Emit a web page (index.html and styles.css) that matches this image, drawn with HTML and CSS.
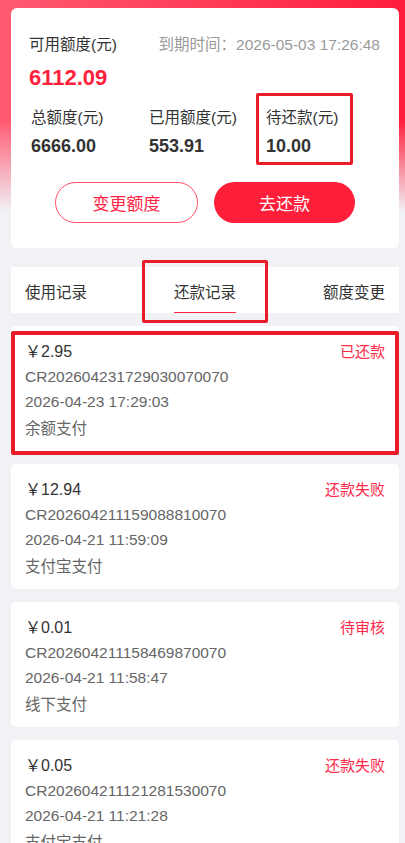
FILE: index.html
```html
<!DOCTYPE html>
<html lang="zh-CN">
<head>
<meta charset="utf-8">
<title>还款记录</title>
<link rel="stylesheet" href="styles.css">
</head>
<body>
<div class="page">
  <section class="summary">
    <div class="top-row">
      <span class="label">可用额度(元)</span>
      <span class="expire">到期时间：2026-05-03 17:26:48</span>
    </div>
    <div class="available">6112.09</div>
    <div class="stats">
      <div class="stat">
        <div class="label">总额度(元)</div>
        <div class="value">6666.00</div>
      </div>
      <div class="stat">
        <div class="label">已用额度(元)</div>
        <div class="value">553.91</div>
      </div>
      <div class="stat">
        <div class="label">待还款(元)</div>
        <div class="value">10.00</div>
      </div>
    </div>
    <div class="actions">
      <button class="btn btn-outline">变更额度</button>
      <button class="btn btn-fill">去还款</button>
    </div>
    <div class="mark mark-stat"></div>
  </section>

  <nav class="tabs">
    <span class="tab">使用记录</span>
    <span class="tab active">还款记录</span>
    <span class="tab">额度变更</span>
    <div class="mark mark-tab"></div>
  </nav>

  <div class="list">
    <div class="item">
      <div class="item-head"><span class="amount">￥2.95</span><span class="status">已还款</span></div>
      <div class="line no">CR202604231729030070070</div>
      <div class="line date">2026-04-23 17:29:03</div>
      <div class="line method">余额支付</div>
      <div class="mark mark-item"></div>
    </div>
    <div class="item">
      <div class="item-head"><span class="amount">￥12.94</span><span class="status">还款失败</span></div>
      <div class="line no">CR202604211159088810070</div>
      <div class="line date">2026-04-21 11:59:09</div>
      <div class="line method">支付宝支付</div>
    </div>
    <div class="item">
      <div class="item-head"><span class="amount">￥0.01</span><span class="status">待审核</span></div>
      <div class="line no">CR202604211158469870070</div>
      <div class="line date">2026-04-21 11:58:47</div>
      <div class="line method">线下支付</div>
    </div>
    <div class="item">
      <div class="item-head"><span class="amount">￥0.05</span><span class="status">还款失败</span></div>
      <div class="line no">CR202604211121281530070</div>
      <div class="line date">2026-04-21 11:21:28</div>
      <div class="line method">支付宝支付</div>
    </div>
  </div>
</div>
</body>
</html>
```

FILE: styles.css
```css
* { box-sizing: border-box; }
html, body { margin: 0; padding: 0; }
body {
  background: #f1f2f6;
  font-family: "Liberation Sans", "Noto Sans CJK SC", sans-serif;
  font-size: 15.5px;
  color: #333;
  overflow: hidden;
}
.page {
  padding: 8px 6px 0 11px;
  background:
    linear-gradient(to bottom, rgba(241,242,246,0) 0px, rgba(241,242,246,0) 120px, #f1f2f6 212px),
    linear-gradient(to right, #ff5a72, #ff1e3c);
  background-size: 100% 212px, 100% 212px;
  background-repeat: no-repeat;
}
.summary {
  position: relative;
  background: #fff;
  border-radius: 6px;
  padding: 27px 19px 25px 18px;
  margin-bottom: 19px;
}
.top-row {
  display: flex;
  justify-content: space-between;
  align-items: center;
  line-height: 20px;
}
.label { color: #333; }
.expire { color: #9a9a9a; }
.available {
  margin-top: 9px;
  color: #ff1f3d;
  font-weight: bold;
  font-size: 22px;
  line-height: 28px;
}
.stats {
  display: grid;
  grid-template-columns: 118px 117px 118px;
  margin-top: 16px;
  padding-left: 2px;
}
.stat .label { line-height: 20px; }
.stat .value {
  margin-top: 6px;
  font-size: 18px;
  font-weight: bold;
  line-height: 24px;
  color: #333;
}
.actions {
  display: flex;
  justify-content: center;
  gap: 16px;
  margin-top: 24px;
  padding-left: 1px;
}
.btn {
  height: 41px;
  border-radius: 21px;
  font-family: inherit;
  font-size: 17px;
  padding: 0;
}
.btn-outline {
  width: 143px;
  background: #fff;
  border: 1px solid #ff4d64;
  color: #ff2444;
}
.btn-fill {
  width: 141px;
  background: #ff1f3a;
  border: none;
  color: #fff;
}
.tabs {
  position: relative;
  display: flex;
  justify-content: space-between;
  align-items: stretch;
  height: 46px;
  background: #fff;
  padding: 0 14px;
  margin-bottom: 13px;
}
.tab {
  display: flex;
  align-items: center;
  padding-top: 6px;
  line-height: 20px;
  color: #333;
  border-bottom: 1px solid transparent;
}
.tab.active { border-bottom-color: #ff2444; }
.list {
  display: flex;
  flex-direction: column;
  gap: 13px;
}
.item {
  position: relative;
  background: #fff;
  border-radius: 5px;
  padding: 14px 14px 10px 14px;
  height: 125px;
}
.item-head {
  display: flex;
  justify-content: space-between;
  align-items: center;
  line-height: 24px;
}
.amount { color: #333; font-size: 16px; }
.status { color: #ff2a4a; font-size: 15px; }
.line {
  color: #666;
  line-height: 24px;
}
.line.no { line-height: 26px; }
.line.method { margin-top: 3px; }
.mark {
  position: absolute;
  border: 3px solid #ea1c29;
  border-radius: 2px;
  pointer-events: none;
}
.mark-stat { left: 245px; top: 85px; width: 97px; height: 72px; }
.mark-tab { left: 131px; top: -7px; width: 126px; height: 63px; }
.mark-item { left: 0; top: 5px; width: 388px; height: 124px; border-width: 4px; }
```
